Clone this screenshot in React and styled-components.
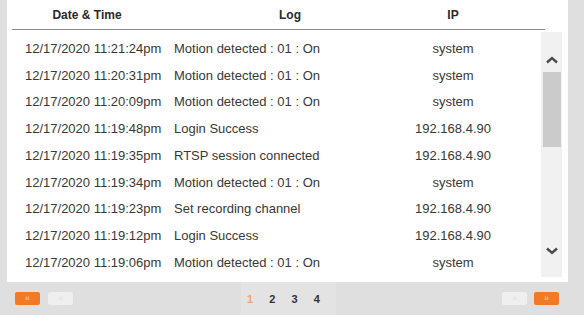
import styled, { createGlobalStyle } from 'styled-components';

const GlobalStyle = createGlobalStyle`
  html, body {
    margin: 0;
    padding: 0;
    background: #dfdfdf;
    font-family: "Liberation Sans", Arial, sans-serif;
  }
`;

const logs = [
  { time: '12/17/2020 11:21:24pm', log: 'Motion detected : 01 : On', ip: 'system' },
  { time: '12/17/2020 11:20:31pm', log: 'Motion detected : 01 : On', ip: 'system' },
  { time: '12/17/2020 11:20:09pm', log: 'Motion detected : 01 : On', ip: 'system' },
  { time: '12/17/2020 11:19:48pm', log: 'Login Success', ip: '192.168.4.90' },
  { time: '12/17/2020 11:19:35pm', log: 'RTSP session connected', ip: '192.168.4.90' },
  { time: '12/17/2020 11:19:34pm', log: 'Motion detected : 01 : On', ip: 'system' },
  { time: '12/17/2020 11:19:23pm', log: 'Set recording channel', ip: '192.168.4.90' },
  { time: '12/17/2020 11:19:12pm', log: 'Login Success', ip: '192.168.4.90' },
  { time: '12/17/2020 11:19:06pm', log: 'Motion detected : 01 : On', ip: 'system' },
];

const Page = styled.div`
  width: 584px;
  height: 315px;
  display: flex;
  flex-direction: column;
  background: #dfdfdf;
  overflow: hidden;
`;

const Panel = styled.div`
  margin-left: 7px;
  width: 561px;
  height: 282px;
  background: #fff;
  padding-left: 5px;
  box-sizing: border-box;
  display: flex;
  flex-direction: column;
`;

const HeaderRow = styled.div`
  width: 533px;
  height: 29px;
  border-bottom: 1px solid #8a8a8a;
  display: grid;
  grid-template-columns: 162px 232px 94px 1fr;
  align-items: center;
  font-size: 12px;
  font-weight: bold;
  color: #2a2a2a;
`;

const HeadCell = styled.div`
  text-align: center;
  padding-right: ${(p) => p.$pr || 0}px;
`;

const Body = styled.div`
  flex: 1;
  display: flex;
`;

const List = styled.div`
  width: 529px;
  padding-top: 5px;
`;

const Row = styled.div`
  height: 26.75px;
  display: grid;
  grid-template-columns: 162px 232px 94px 1fr;
  align-items: center;
  font-size: 13px;
  color: #383838;
  white-space: nowrap;
`;

const TimeCell = styled.div`
  padding-left: 13px;
`;

const IpCell = styled.div`
  text-align: center;
`;

const Scrollbar = styled.div`
  width: 21px;
  margin-top: 2px;
  height: 245px;
  background: #f1f1f1;
  display: flex;
  flex-direction: column;
  align-items: center;
`;

const ArrowBox = styled.div`
  height: ${(p) => p.$h}px;
  width: 100%;
  display: flex;
  justify-content: center;
  align-items: ${(p) => (p.$down ? 'flex-start' : 'flex-end')};
  padding: ${(p) => (p.$down ? '10px 0 0' : '0 0 8px')};
  box-sizing: border-box;
`;

const Thumb = styled.div`
  width: 18px;
  height: 75px;
  background: #cbcbcb;
`;

const Track = styled.div`
  flex: 1;
`;

const Footer = styled.div`
  flex: 1;
  display: flex;
  align-items: center;
  padding: 0 25px 0 15px;
`;

const Group = styled.div`
  display: flex;
  gap: ${(p) => p.$gap}px;
  margin-left: ${(p) => p.$ml || 0};
`;

const NavBtn = styled.div`
  width: 25px;
  height: 13px;
  border-radius: 2px;
  background: ${(p) => (p.$active ? '#f07b24' : '#efefef')};
  color: ${(p) => (p.$active ? '#f9b783' : '#e4e4e4')};
  font-size: 9px;
  line-height: 13px;
  text-align: center;
  font-weight: bold;
`;

const Pager = styled.div`
  margin-left: 168px;
  width: 95px;
  height: 33px;
  background: #e3e3e3;
  display: flex;
  align-items: center;
  padding-left: 6px;
  box-sizing: border-box;
`;

const PageNum = styled.span`
  width: 25px;
  font-size: 11px;
  font-weight: bold;
  color: ${(p) => (p.$active ? '#f2a468' : '#333')};
`;

const Chevron = ({ down }) => (
  <svg width="12" height="8" viewBox="0 0 12 8">
    <path
      d={down ? 'M1 1.5 L6 6 L11 1.5' : 'M1 6.5 L6 2 L11 6.5'}
      fill="none"
      stroke="#4a4a4a"
      strokeWidth="2.4"
    />
  </svg>
);

const App = () => (
  <Page>
    <GlobalStyle />
    <Panel>
      <HeaderRow>
        <HeadCell $pr={12}>Date &amp; Time</HeadCell>
        <HeadCell>Log</HeadCell>
        <HeadCell>IP</HeadCell>
      </HeaderRow>
      <Body>
        <List>
          {logs.map((r) => (
            <Row key={r.time}>
              <TimeCell>{r.time}</TimeCell>
              <div>{r.log}</div>
              <IpCell>{r.ip}</IpCell>
            </Row>
          ))}
        </List>
        <Scrollbar>
          <ArrowBox $h={40}>
            <Chevron />
          </ArrowBox>
          <Thumb />
          <Track />
          <ArrowBox $h={40} $down>
            <Chevron down />
          </ArrowBox>
        </Scrollbar>
      </Body>
    </Panel>
    <Footer>
      <Group $gap={8}>
        <NavBtn $active>«</NavBtn>
        <NavBtn>«</NavBtn>
      </Group>
      <Pager>
        <PageNum $active>1</PageNum>
        <PageNum>2</PageNum>
        <PageNum>3</PageNum>
        <PageNum>4</PageNum>
      </Pager>
      <Group $gap={7} $ml="auto">
        <NavBtn>»</NavBtn>
        <NavBtn $active>»</NavBtn>
      </Group>
    </Footer>
  </Page>
);

export default App;
